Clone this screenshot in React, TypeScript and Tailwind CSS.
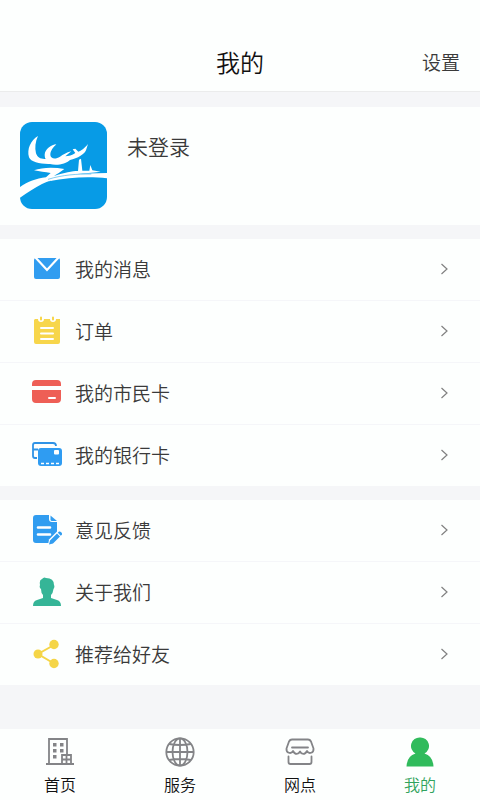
import React from 'react';

const Logo = () => (
  <svg viewBox="0 0 261 261" className="h-[87px] w-[87px] shrink-0" role="img" aria-label="头像">
    <rect width="261" height="261" rx="36" fill="#079be6" />
    <g fill="#ffffff">
      <path d="M54 42 C32 54 20 82 27 106 C32 120 62 127 90 126 C110 132 138 126 150 114 C172 110 196 96 199 82 L204 66 C192 80 184 86 175 89 L166 80 L158 82 L166 93 C156 100 146 102 136 103 L154 88 C138 92 130 98 120 104 C106 113 92 110 91 99 C91 86 100 76 109 67 C94 68 75 82 74 98 C74 104 75 107 77 111 C62 112 52 106 48 94 C44 78 46 58 54 42 Z" />
      <path d="M42 145 C66 136 100 135 133 141 C122 150 110 156 102 162 C134 152 156 147 174 147 L177 113 L183 110 L187 146 L208 146 L211 129 L217 145 L242 149 C216 152 194 153 172 155 L261 153 L261 161 C180 154 110 164 66 186 C44 198 24 210 0 227 L0 195 C24 179 48 170 78 166 L92 153 C76 150 58 149 42 145 Z" />
      <path d="M110 166 C160 155 214 155 261 158 V169 C214 164 154 164 86 178 Z" />
    </g>
    <path d="M84 172 C130 158 170 156 214 156" fill="none" stroke="#079be6" strokeWidth="1.500" />
  </svg>
);

const MailIcon = () => (
  <svg viewBox="0 0 30 30" className="h-[30px] w-[30px]" aria-hidden="true">
    <rect x="2" y="4" width="26" height="21" rx="2" fill="#319df0" />
    <path d="M3 3 L15 16 L27 3" fill="none" stroke="#fff" strokeWidth="2.200" />
  </svg>
);

const OrderIcon = () => (
  <svg viewBox="0 0 30 30" className="h-[30px] w-[30px]" aria-hidden="true">
    <path d="M3 3 H6 A3 3 0 0 0 12 3 H18 A3 3 0 0 0 24 3 H28 V26 Q28 28 26 28 H4 Q2 28 2 26 V4 Z" fill="#f7d64b" />
    <path d="M9 1.500 V3.500 M21 1.500 V3.500" stroke="#f7d64b" strokeWidth="2" strokeLinecap="round" />
    <path d="M9 12 H21 M9 17.500 H21 M9 23 H21" stroke="#fff" strokeWidth="2" strokeLinecap="round" />
  </svg>
);

const CitizenCardIcon = () => (
  <svg viewBox="0 0 30 30" className="h-[30px] w-[30px]" aria-hidden="true">
    <path d="M0 8 V6 Q0 2 4 2 H25 Q29 2 29 6 V8 Z M0 12 H29 V21 Q29 25 25 25 H4 Q0 25 0 21 Z" fill="#ee5f56" />
    <path d="M17 20 H23" stroke="#fff" strokeWidth="2" strokeLinecap="round" />
  </svg>
);

const BankCardIcon = () => (
  <svg viewBox="0 0 30 30" className="h-[30px] w-[30px]" aria-hidden="true">
    <path d="M5 18 H3 Q1 18 1 16 V5 Q1 3 3 3 H21 Q24 3 24 6 M1 9.500 H6" fill="none" stroke="#2f93e6" strokeWidth="1.800" />
    <rect x="6" y="8" width="24" height="18" rx="3" fill="#2f9cf2" />
    <rect x="22" y="10" width="5" height="4.500" rx="1" fill="#fff" />
    <path d="M9 23.500 H28" stroke="#fff" strokeWidth="1.500" strokeDasharray="3 2" />
  </svg>
);

const FeedbackIcon = () => (
  <svg viewBox="0 0 30 30" className="h-[30px] w-[30px]" aria-hidden="true">
    <path d="M4 0 H17 V4 Q17 7 20 7 H25 V20 L18 28 H4 Q1 28 1 25 V3 Q1 0 4 0 Z" fill="#319df0" />
    <path d="M18.500 0.500 L25 6 H20 Q18.500 6 18.500 4.500 Z" fill="#319df0" />
    <path d="M6 12.500 H18 M6 19.500 H18" stroke="#fff" strokeWidth="2.600" strokeLinecap="round" />
    <path d="M16 30 L17 24.500 L26 15.500 L30 20 L22 29 Z" fill="#fff" />
    <path d="M17 29.500 L18 25.500 L25 18.500 L28 21.500 L21 28.500 Z M25.800 17.800 L27 16.600 Q28 16 29.500 17.500 Q30.500 19 29.800 19.700 L28.800 20.700 Z" fill="#319df0" />
  </svg>
);

const AboutIcon = () => (
  <svg viewBox="0 0 30 30" className="h-[30px] w-[30px]" aria-hidden="true">
    <path d="M1 29 Q1 24 5 23 L11 21 V18 Q9 16 9 12 Q7 11 8 8 Q7 3 10 2 Q12 -0.500 14 1 Q22 1 22 8 Q23 10 21.500 12 Q21 16 19 18 V21 L25 23 Q29 24 29 29 Z" fill="#35b597" />
  </svg>
);

const ShareIcon = () => (
  <svg viewBox="0 0 30 30" className="h-[30px] w-[30px]" aria-hidden="true">
    <path d="M22 6 L6 15 L22 24.500" fill="none" stroke="#f5d547" strokeWidth="2" />
    <g fill="#f5d547">
      <circle cx="22" cy="5.500" r="4.700" />
      <circle cx="6" cy="15" r="4.500" />
      <circle cx="22" cy="24.500" r="4.700" />
    </g>
  </svg>
);

const HomeIcon = () => (
  <svg viewBox="0 0 30 30" className="h-[30px] w-[30px]" fill="none" stroke="#838487" strokeWidth="1.800" aria-hidden="true">
    <path d="M1 27 H29 M4 27 V2 H22 V18 M17 27 V18 H26 V27 M21.500 18 V27 M17 22.500 H26" />
    <g fill="#838487" stroke="none">
      <rect x="8" y="6" width="3.500" height="3.500" />
      <rect x="15" y="6" width="3.500" height="3.500" />
      <rect x="8" y="12" width="3.500" height="3.500" />
      <rect x="15" y="12" width="3.500" height="3.500" />
      <rect x="8" y="18" width="3.500" height="3.500" />
    </g>
  </svg>
);

const ServiceIcon = () => (
  <svg viewBox="0 0 30 30" className="h-[30px] w-[30px]" fill="none" stroke="#838487" strokeWidth="1.800" aria-hidden="true">
    <circle cx="15" cy="15" r="13.700" />
    <ellipse cx="15" cy="15" rx="7.500" ry="13.700" />
    <path d="M15 1 V29 M1 15 H29 M4 7 Q15 9 26 7 M4 23 Q15 21 26 23" />
  </svg>
);

const StoreIcon = () => (
  <svg viewBox="0 0 30 30" className="h-[30px] w-[30px]" fill="none" stroke="#838487" strokeWidth="1.800" strokeLinecap="round" strokeLinejoin="round" aria-hidden="true">
    <path d="M7 2.500 H23 Q25 2.500 26 4.500 L28.500 11.500 C29 16 24 17.500 22 14 C20 18 16.500 17.500 15 14.500 C13.500 17.500 10 18 8 14 C6 17.500 1 16 1.500 11.500 L4 4.500 Q5 2.500 7 2.500 Z" />
    <path d="M7 10.500 H23 M3.500 19.500 V25 Q3.500 27 5.500 27 H24.500 Q26.500 27 26.500 25 V19.500" />
  </svg>
);

const MineIcon = () => (
  <svg viewBox="0 0 30 30" className="h-[30px] w-[30px]" fill="#30bb5c" aria-hidden="true">
    <path d="M15 0.500 A8.500 8.500 0 0 1 19.500 16.500 Q28 19 28.500 29.500 H1.500 Q2 19 10.500 16.500 A8.500 8.500 0 0 1 15 0.500 Z" />
  </svg>
);

const accountItems = [
  { icon: MailIcon, label: '我的消息' },
  { icon: OrderIcon, label: '订单' },
  { icon: CitizenCardIcon, label: '我的市民卡' },
  { icon: BankCardIcon, label: '我的银行卡' },
];

const otherItems = [
  { icon: FeedbackIcon, label: '意见反馈' },
  { icon: AboutIcon, label: '关于我们' },
  { icon: ShareIcon, label: '推荐给好友' },
];

const tabs = [
  { icon: HomeIcon, label: '首页' },
  { icon: ServiceIcon, label: '服务' },
  { icon: StoreIcon, label: '网点' },
  { icon: MineIcon, label: '我的', active: true },
];

const Menu = ({ items }: { items: { icon: React.FC; label: string }[] }) => (
  <ul className="divide-y divide-[#f5f6f9] bg-[#fdfffe]">
    {items.map((item) => (
      <li key={item.label}>
        <button type="button" className="flex h-[61px] w-full items-center px-8 pb-0.5 text-left">
          <item.icon />
          <span className="ml-[13px] flex-1 text-[19px] leading-7">{item.label}</span>
          <svg viewBox="0 0 8 12" className="h-3 w-2" fill="none" stroke="#808080" strokeWidth="1.200" aria-hidden="true">
            <path d="M1.500 1 L7 6 L1.500 11" />
          </svg>
        </button>
      </li>
    ))}
  </ul>
);

const App = () => {
  return (
    <div className="flex min-h-screen flex-col bg-[#f5f6f8] font-['Noto_Sans_CJK_SC',sans-serif] font-[350] text-[#3a3a3a]">
      <header className="grid grid-cols-3 items-center border-b border-[#ebecec] bg-[#fdfffe] px-5 pt-11 pb-[11px]">
        <h1 className="col-start-2 text-center text-2xl leading-9 font-[350] text-[#111111]">我的</h1>
        <button type="button" className="justify-self-end text-[19px] leading-7">设置</button>
      </header>

      <main className="flex flex-1 flex-col">
        <section className="mt-[15px] flex items-start bg-[#fdfffe] px-5 pt-[15px] pb-4">
          <Logo />
          <p className="mt-2 ml-5 text-[21px] leading-8">未登录</p>
        </section>

        <div className="mt-[14px]">
          <Menu items={accountItems} />
        </div>
        <div className="mt-[14px] mb-10">
          <Menu items={otherItems} />
        </div>
      </main>

      <nav className="grid grid-cols-4 bg-[#fdfffe] pt-2 pb-1">
        {tabs.map((tab) => (
          <a
            key={tab.label}
            href="#"
            aria-current={tab.active ? 'page' : undefined}
            className={`flex flex-col items-center gap-[5px] text-base leading-6 ${tab.active ? 'text-[#30a35c]' : 'text-[#111111]'}`}
          >
            <tab.icon />
            {tab.label}
          </a>
        ))}
      </nav>
    </div>
  );
};

export default App;
